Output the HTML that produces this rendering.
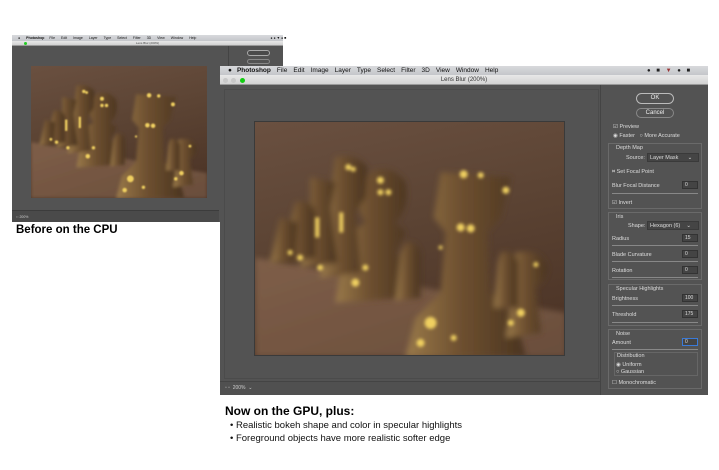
<!DOCTYPE html>
<html><head><meta charset="utf-8"><style>
*{margin:0;padding:0;box-sizing:border-box}
body{width:719px;height:470px;background:#fff;position:relative;overflow:hidden;font-family:"Liberation Sans",sans-serif}
.abs{position:absolute}
.menu{background:linear-gradient(#d8d9dc,#c4c6ca);color:#111;font-size:6.5px;white-space:nowrap}
.menu span{margin-right:6px}
.title{background:linear-gradient(#e8e8e8,#d2d2d2);border-bottom:1px solid #999}
.gray{background:#535353}
.pn{color:#ddd;font-size:5.5px;position:absolute}
.box{position:absolute;background:#454545;border:1px solid #3a3a3a}
.grp{position:absolute;border:1px solid #6a6a6a;left:608px;width:94px}
.sl{position:absolute;height:1px;background:#888;left:612px;width:86px}
.fld{position:absolute;background:#444;border:1px solid #333;width:16px;height:8px;left:682px;color:#ddd;font-size:5px;padding-left:2px;line-height:7px}
.btn{position:absolute;border:1px solid #bbb;border-radius:6px;color:#eee;font-size:6px;text-align:center;left:636px;width:38px}
</style></head><body>
<svg width="0" height="0" style="position:absolute"><defs>
<linearGradient id="bg" x1="0" y1="0" x2="0.3" y2="1"><stop offset="0" stop-color="#6a5040"/><stop offset=".5" stop-color="#5c4434"/><stop offset="1" stop-color="#4e3628"/></linearGradient>
<linearGradient id="brd" x1="0" y1="0" x2="1" y2="1"><stop offset="0" stop-color="#7e5e48"/><stop offset="1" stop-color="#6a4e3c"/></linearGradient>
<linearGradient id="pc" x1="0" y1="0" x2="1" y2="0"><stop offset="0" stop-color="#9a7a4a"/><stop offset=".45" stop-color="#6e5030"/><stop offset="1" stop-color="#4a3420"/></linearGradient>
<filter id="b1"><feGaussianBlur stdDeviation="3"/></filter>
<filter id="b2"><feGaussianBlur stdDeviation="1.5"/></filter>
<symbol id="chess" viewBox="0 0 310 234" preserveAspectRatio="none">
<rect width="310" height="234" fill="url(#bg)"/>
<polygon points="0,135 310,190 310,234 0,234" fill="url(#brd)" filter="url(#b1)"/>
<g filter="url(#b1)" fill="url(#pc)">
<path d="M185,50 L255,55 L245,95 L232,110 L235,170 L260,195 L270,234 L150,234 L160,195 L185,170 L190,110 L178,95Z"/>
<path d="M115,50 Q135,40 150,60 Q155,85 140,100 L150,110 L140,130 L155,150 L150,175 L80,180 L85,150 L100,130 L95,110 L110,100 Q95,80 115,50Z"/>
<path d="M80,35 Q100,30 112,45 L110,75 L100,90 L105,150 L65,155 L70,90 L75,75Z"/>
<path d="M55,55 L80,60 L75,85 L82,140 L45,145 L55,90Z"/>
<path d="M40,80 Q55,75 60,90 L60,135 L30,140 L35,100Z"/>
<path d="M25,95 L42,100 L40,140 L15,140Z"/>
<path d="M260,130 Q285,125 292,145 Q290,160 280,165 L285,210 L250,215 L258,165 Q250,150 260,130Z"/>
<path d="M150,120 Q162,118 165,130 L165,175 L140,178 L145,130Z"/>
<path d="M245,130 Q258,126 262,140 L262,185 L238,185 L242,140Z"/>
</g>
<g filter="url(#b2)" fill="#f0d060">
<circle cx="208" cy="52" r="4"/><circle cx="225" cy="53" r="3"/><circle cx="250" cy="68" r="3.5"/>
<circle cx="205" cy="105" r="4"/><circle cx="215" cy="106" r="4"/>
<circle cx="125" cy="58" r="3.5"/><circle cx="125" cy="70" r="3"/><circle cx="133" cy="70" r="3"/>
<circle cx="93" cy="45" r="3"/><circle cx="98" cy="47" r="2.5"/>
<rect x="84" y="90" width="4" height="20"/><rect x="60" y="95" width="4" height="20"/>
<circle cx="100" cy="160" r="4"/><circle cx="110" cy="145" r="3"/><circle cx="65" cy="145" r="3"/>
<circle cx="175" cy="200" r="6"/><circle cx="165" cy="220" r="4"/><circle cx="198" cy="215" r="3"/>
<circle cx="265" cy="190" r="4"/><circle cx="255" cy="200" r="3"/><circle cx="280" cy="142" r="2.5"/>
<circle cx="45" cy="135" r="3"/><circle cx="35" cy="130" r="2.5"/><circle cx="185" cy="125" r="2"/>
</g>
</symbol></defs></svg>

<!-- small window -->
<div class="abs gray" style="left:12px;top:35px;width:271px;height:187px"></div>
<div class="abs menu" style="left:12px;top:35px;width:271px;height:6px;font-size:3.5px;line-height:6px;padding-left:6px"><span>●</span><b style="margin-right:5px">Photoshop</b><span>File</span><span>Edit</span><span>Image</span><span>Layer</span><span>Type</span><span>Select</span><span>Filter</span><span>3D</span><span>View</span><span>Window</span><span>Help</span><span style="margin-left:68px;letter-spacing:1px">●●▼●■</span></div>
<div class="abs title" style="left:12px;top:41px;width:271px;height:5px;font-size:3px;text-align:center;color:#444;line-height:5px">Lens Blur (200%)</div>
<div class="abs" style="left:24px;top:42px;width:3px;height:3px;border-radius:50%;background:#2c2"></div>
<div class="abs" style="left:228px;top:46px;width:1px;height:20px;background:#444"></div>
<div class="abs" style="left:247px;top:50px;width:23px;height:6px;border:1px solid #aaa;border-radius:3px;background:#4a4a4a"></div>
<div class="abs" style="left:247px;top:59px;width:23px;height:5px;border:1px solid #888;border-radius:3px"></div>
<svg class="abs" style="left:31px;top:66px" width="176" height="132"><use href="#chess" width="176" height="132"/></svg>
<div class="abs" style="left:12px;top:210px;width:207px;height:12px;background:#4a4a4a;border-top:1px solid #3c3c3c"></div>
<div class="abs" style="left:16px;top:215px;font-size:3.5px;color:#ccc">▫▫ 200%</div>
<div class="abs" style="left:16px;top:224px;font-size:11.5px;font-weight:bold;color:#000">Before on the CPU</div>

<!-- big window -->
<div class="abs gray" style="left:220px;top:66px;width:488px;height:329px"></div>
<div class="abs menu" style="left:220px;top:66px;width:488px;height:9px;line-height:9px;padding-left:8px"><span style="margin-right:5px">●</span><b style="margin-right:6px">Photoshop</b><span>File</span><span>Edit</span><span>Image</span><span>Layer</span><span>Type</span><span>Select</span><span>Filter</span><span>3D</span><span>View</span><span>Window</span><span>Help</span></div>
<div class="abs" style="left:647px;top:68px;font-size:6px;color:#222;letter-spacing:2px">● ■ <span style="color:#933">▼</span> ● ■</div>
<div class="abs title" style="left:220px;top:75px;width:488px;height:10px;font-size:6px;text-align:center;color:#333;line-height:10px">Lens Blur (200%)</div>
<div class="abs" style="left:223px;top:78px;width:5px;height:5px;border-radius:50%;background:#c8c8c8"></div>
<div class="abs" style="left:231px;top:78px;width:5px;height:5px;border-radius:50%;background:#c8c8c8"></div>
<div class="abs" style="left:240px;top:78px;width:5px;height:5px;border-radius:50%;background:#1c1"></div>
<div class="abs" style="left:224px;top:89px;width:375px;height:290px;border:1px solid #4b4b4b"></div>
<div class="abs" style="left:600px;top:85px;width:1px;height:310px;background:#444"></div>
<svg class="abs" style="left:254px;top:121px;border:1px solid #3a3a3a" width="311" height="235"><use href="#chess" width="311" height="235"/></svg>
<div class="abs" style="left:220px;top:381px;width:380px;height:14px;background:#505050;border-top:1px solid #444"></div>
<div class="abs" style="left:225px;top:385px;font-size:5px;color:#ccc">▫ ▫ &nbsp;200% &nbsp;⌄</div>

<!-- panel -->
<div class="btn" style="top:93px;height:11px;line-height:9px">OK</div>
<div class="btn" style="top:108px;height:10px;line-height:8px;border-color:#888">Cancel</div>
<div class="pn" style="left:613px;top:124px">☑ Preview</div>
<div class="pn" style="left:613px;top:133px">◉ Faster &nbsp;&nbsp;○ More Accurate</div>
<div class="grp" style="top:143px;height:66px"></div>
<div class="pn" style="left:616px;top:145px">Depth Map</div>
<div class="pn" style="left:626px;top:155px">Source:</div>
<div class="box" style="left:647px;top:153px;width:52px;height:9px"></div><div class="pn" style="left:650px;top:155px">Layer Mask &nbsp;&nbsp;&nbsp;&nbsp;&nbsp;⌄</div>
<div class="pn" style="left:612px;top:169px">⌗ Set Focal Point</div>
<div class="pn" style="left:612px;top:183px">Blur Focal Distance</div><div class="fld" style="top:181px">0</div>
<div class="sl" style="top:193px"></div>
<div class="pn" style="left:612px;top:200px">☑ Invert</div>
<div class="grp" style="top:212px;height:68px"></div>
<div class="pn" style="left:616px;top:214px">Iris</div>
<div class="pn" style="left:628px;top:223px">Shape:</div>
<div class="box" style="left:647px;top:221px;width:52px;height:9px"></div><div class="pn" style="left:650px;top:223px">Hexagon (6) &nbsp;&nbsp;&nbsp;⌄</div>
<div class="pn" style="left:612px;top:236px">Radius</div><div class="fld" style="top:234px">15</div>
<div class="sl" style="top:245px"></div>
<div class="pn" style="left:612px;top:252px">Blade Curvature</div><div class="fld" style="top:250px">0</div>
<div class="sl" style="top:261px"></div>
<div class="pn" style="left:612px;top:268px">Rotation</div><div class="fld" style="top:266px">0</div>
<div class="sl" style="top:277px"></div>
<div class="grp" style="top:284px;height:42px"></div>
<div class="pn" style="left:616px;top:286px">Specular Highlights</div>
<div class="pn" style="left:612px;top:296px">Brightness</div><div class="fld" style="top:294px">100</div>
<div class="sl" style="top:305px"></div>
<div class="pn" style="left:612px;top:312px">Threshold</div><div class="fld" style="top:310px">175</div>
<div class="sl" style="top:322px"></div>
<div class="grp" style="top:329px;height:60px"></div>
<div class="pn" style="left:616px;top:331px">Noise</div>
<div class="pn" style="left:612px;top:340px">Amount</div><div class="fld" style="top:338px;border-color:#3a7ad8">0</div>
<div class="sl" style="top:349px"></div>
<div class="abs" style="left:614px;top:352px;width:84px;height:24px;border:1px solid #666"></div>
<div class="pn" style="left:617px;top:353px">Distribution</div>
<div class="pn" style="left:616px;top:362px">◉ Uniform</div>
<div class="pn" style="left:616px;top:369px">○ Gaussian</div>
<div class="pn" style="left:612px;top:380px">☐ Monochromatic</div>

<div class="abs" style="left:225px;top:404px;font-size:12px;font-weight:bold;color:#000">Now on the GPU, plus:</div>
<div class="abs" style="left:230px;top:419px;font-size:9.5px;color:#111;line-height:13px">• Realistic bokeh shape and color in specular highlights<br>• Foreground objects have more realistic softer edge</div>
</body></html>
